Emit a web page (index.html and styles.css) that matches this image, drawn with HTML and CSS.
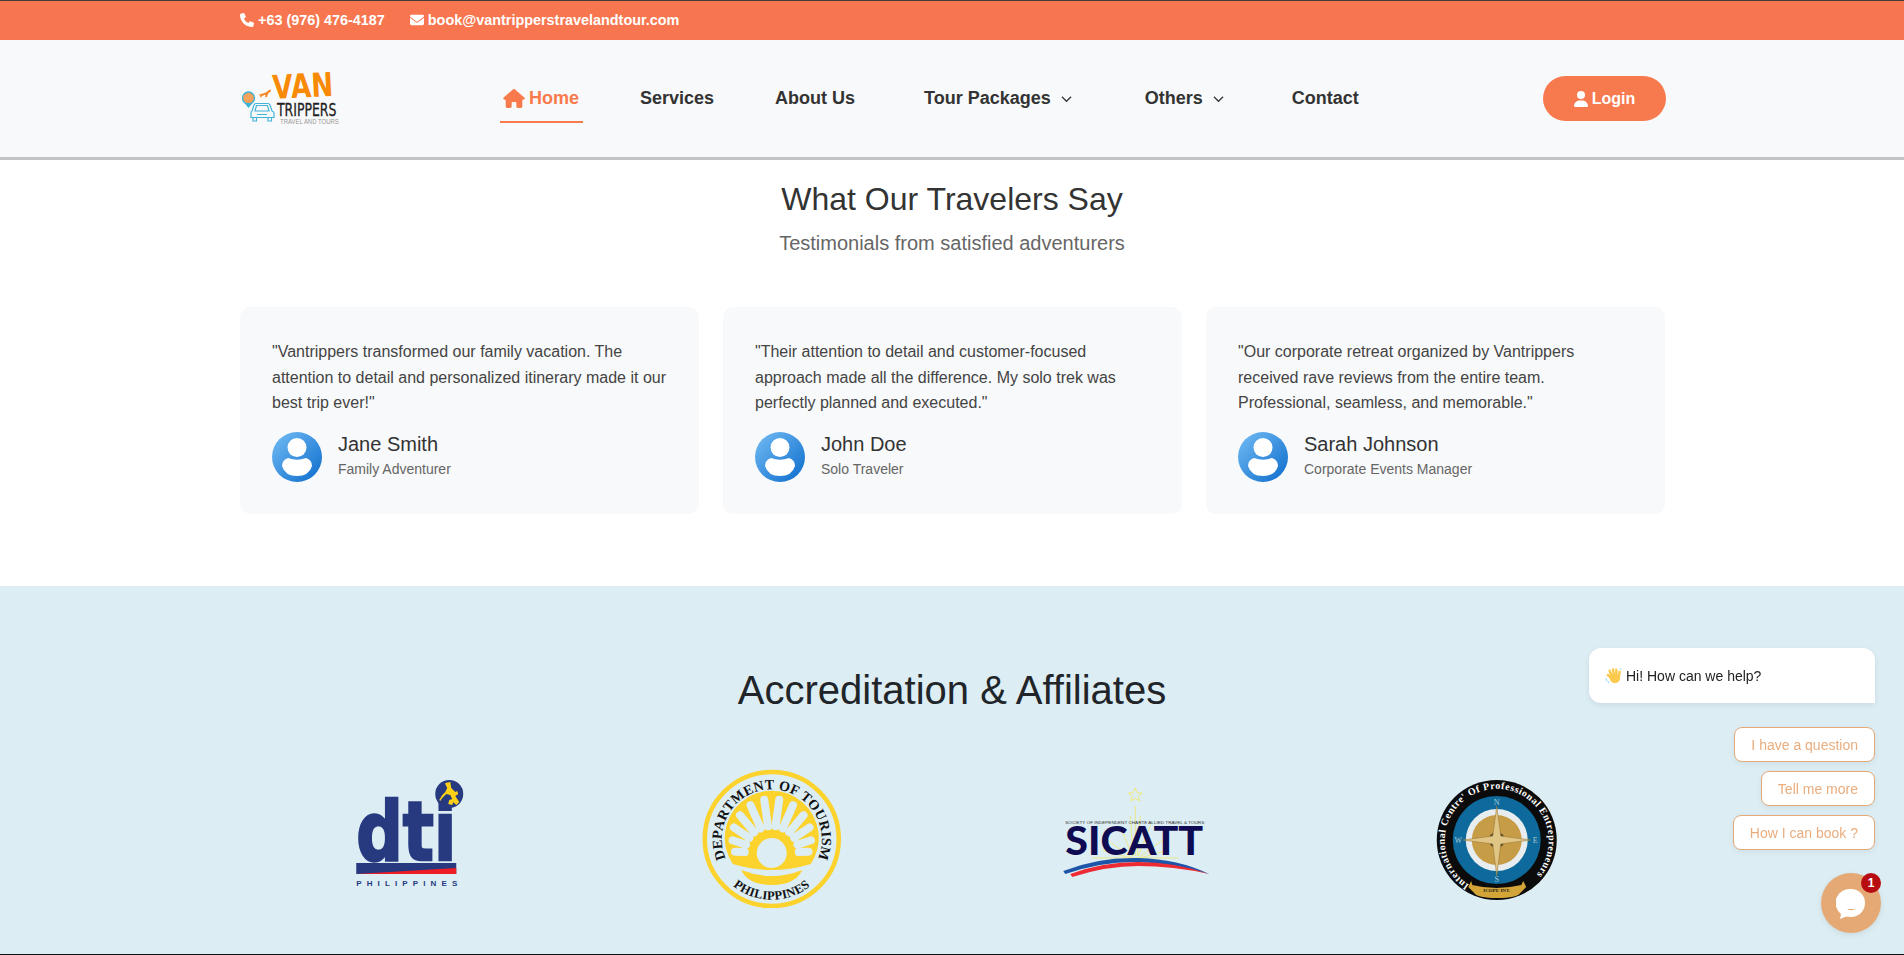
FILE: index.html
```html
<!doctype html>
<html lang="en">
<head>
    <meta charset="UTF-8">
    <title>Van Trippers Travel and Tours</title>
    <link rel="stylesheet" href="styles.css">
</head>
<body>
    <div class="topbar">
        <div class="wrap topbar-in">
            <span class="top-item">
                <svg class="top-ico" viewBox="0 0 512 512"><path d="M164.900 24.600c-7.700-18.600-28-28.500-47.400-23.200l-88 24C12.100 30.200 0 46 0 64C0 311.400 200.600 512 448 512c18 0 33.800-12.100 38.600-29.500l24-88c5.300-19.400-4.600-39.700-23.200-47.400l-96-40c-16.300-6.800-35.200-2.100-46.300 11.600L304.700 368C234.300 334.700 177.300 277.700 144 207.300L193.300 167c13.700-11.200 18.400-30 11.600-46.300l-40-96z"/></svg>
                +63 (976) 476-4187
            </span>
            <span class="top-item">
                <svg class="top-ico" viewBox="0 0 512 512"><path d="M48 64C21.500 64 0 85.500 0 112c0 15.100 7.100 29.300 19.200 38.400L236.800 313.600c11.400 8.500 27 8.500 38.400 0L492.800 150.400c12.100-9.100 19.200-23.300 19.200-38.400c0-26.500-21.500-48-48-48H48zM0 176V384c0 35.300 28.700 64 64 64H448c35.300 0 64-28.700 64-64V176L294.400 339.200c-22.800 17.100-54 17.100-76.800 0L0 176z"/></svg>
                book@vantripperstravelandtour.com
            </span>
        </div>
    </div>

    <header class="navbar">
        <div class="wrap navbar-in">
            <svg class="logo" viewBox="0 0 100 56">
                <text class="logo-van" transform="translate(33 28) rotate(-3) scale(.795 1)">VAN</text>
                <text class="logo-trip" transform="translate(37 45) scale(.77 1)">TRIPPERS</text>
                <text class="logo-sub" transform="translate(40 53) scale(.92 1)">TRAVEL AND TOURS</text>
                <path d="M18 24l8-2.500 3-2.500 2-.5-.5 2-2.500 2-1 3.500-1.500 .5-.2-3-3.300 1.500-1 1.500-.8-.5 .3-1.500-2.500-.5z" fill="#f7811c"/>
                <circle cx="8.500" cy="27" r="6" fill="#f4a35c" stroke="#3cb2d6" stroke-width="1.300"/>
                <path d="M4.500 32l4 5 4-5z" fill="#3cb2d6"/>
                <path d="M12 40l2-6q.5-1.500 2-1.500h12q1.500 0 2 1.500l2 6q2 .5 2 2.500v4h-23v-4q0-2 1-2.500zM15 40h14l-1.500-5.500h-11z" fill="none" stroke="#43b4d8" stroke-width="1.200"/>
                <path d="M13 47v3h3.500v-3M28 47v3h3.500v-3M17 43.500h10" fill="none" stroke="#43b4d8" stroke-width="1.200"/>
            </svg>

            <nav class="menu">
                <a class="menu-link active" href="#">
                    <svg class="home-ico" viewBox="0 0 576 512"><path d="M575.800 255.500c0 18-15 32.100-32 32.100h-32l.7 160.200c0 2.700-.2 5.400-.5 8.100V472c0 22.100-17.900 40-40 40H456c-1.100 0-2.200 0-3.300-.1c-1.400 .1-2.800 .1-4.200 .1H416 392c-22.100 0-40-17.900-40-40V448 384c0-17.700-14.300-32-32-32H256c-17.700 0-32 14.300-32 32v64 24c0 22.100-17.900 40-40 40H160 128.100c-1.500 0-3-.1-4.500-.2c-1.200 .1-2.400 .2-3.600 .2H104c-22.100 0-40-17.900-40-40V360c0-.9 0-1.900 .1-2.800V287.600H32c-18 0-32-14-32-32.100c0-9 3-17 10-24L266.400 8c7-7 15-8 22-8s15 2 21 7L564.800 231.500c8 7 12 15 11 24z"/></svg>
                    Home
                </a>
                <a class="menu-link m-services" href="#">Services</a>
                <a class="menu-link m-about" href="#">About Us</a>
                <a class="menu-link m-tour" href="#">Tour Packages <svg class="chev" viewBox="0 0 12 8"><path d="M1 1.500l5 5 5-5"/></svg></a>
                <a class="menu-link m-others" href="#">Others <svg class="chev" viewBox="0 0 12 8"><path d="M1 1.500l5 5 5-5"/></svg></a>
                <a class="menu-link m-contact" href="#">Contact</a>
            </nav>

            <a class="login" href="#">
                <svg class="login-ico" viewBox="0 0 448 512"><path d="M224 256A128 128 0 1 0 224 0a128 128 0 1 0 0 256zm-45.700 48C79.800 304 0 383.800 0 482.300C0 498.700 13.300 512 29.700 512H418.300c16.400 0 29.700-13.300 29.700-29.700C448 383.800 368.200 304 269.700 304H178.300z"/></svg>
                Login
            </a>
        </div>
    </header>

    <svg class="defs" width="0" height="0">
        <defs>
            <linearGradient id="avatarGrad" x1="0" y1="0" x2="1" y2="1">
                <stop offset="0" stop-color="#74bdf5"/>
                <stop offset="1" stop-color="#0b6bcb"/>
            </linearGradient>
            <symbol id="avatar" viewBox="0 0 50 50">
                <circle cx="25" cy="25" r="25" fill="url(#avatarGrad)"/>
                <circle cx="25" cy="15.500" r="9.500" fill="#fff"/>
                <path d="M10 34q0-6 6-8q9 3.500 18 0q6 2 6 8q-3 10-15 10t-15-10z" fill="#fff"/>
            </symbol>
        </defs>
    </svg>

    <section class="testimonials">
        <h2 class="t-title">What Our Travelers Say</h2>
        <p class="t-sub">Testimonials from satisfied adventurers</p>
        <div class="wrap t-grid">
            <article class="t-card">
                <p class="t-text">"Vantrippers transformed our family vacation. The attention to detail and personalized itinerary made it our best trip ever!"</p>
                <div class="t-person">
                    <svg class="avatar"><use href="#avatar"/></svg>
                    <div class="t-who">
                        <div class="t-name">Jane Smith</div>
                        <div class="t-role">Family Adventurer</div>
                    </div>
                </div>
            </article>
            <article class="t-card">
                <p class="t-text">"Their attention to detail and customer-focused approach made all the difference. My solo trek was perfectly planned and executed."</p>
                <div class="t-person">
                    <svg class="avatar"><use href="#avatar"/></svg>
                    <div class="t-who">
                        <div class="t-name">John Doe</div>
                        <div class="t-role">Solo Traveler</div>
                    </div>
                </div>
            </article>
            <article class="t-card">
                <p class="t-text">"Our corporate retreat organized by Vantrippers received rave reviews from the entire team. Professional, seamless, and memorable."</p>
                <div class="t-person">
                    <svg class="avatar"><use href="#avatar"/></svg>
                    <div class="t-who">
                        <div class="t-name">Sarah Johnson</div>
                        <div class="t-role">Corporate Events Manager</div>
                    </div>
                </div>
            </article>
        </div>
    </section>

    <section class="affiliates">
        <h2 class="a-title">Accreditation &amp; Affiliates</h2>
        <div class="a-row">
            <!-- dti -->
            <svg class="a-logo" viewBox="0 0 362 150">
                <text class="dti-word" x="129" y="102" textLength="100" lengthAdjust="spacingAndGlyphs">dti</text>
                <rect x="129" y="105" width="100" height="11" fill="#273a80"/>
                <path d="M129 116l100-6v6z" fill="#ee1c25"/>
                <text class="dti-sub" x="129" y="128" textLength="101">PHILIPPINES</text>
                <circle cx="222" cy="36" r="14" fill="#273a80"/>
                <path d="M218 25l5-1 1 6 4 4 2-1 1 3-3 2 2 3 2 3-3 3-3-3-1 3-4-1 1-4 3-1-2-4-4-1-4 4-2 3-1-1 3-5 3-3 2-4-2-4z" fill="#fcd116"/>
            </svg>
            <!-- department of tourism -->
            <svg class="a-logo" viewBox="0 0 362 150">
                <defs>
                    <path id="dotTop" d="M140.500 110A50 50 0 1 1 222.500 110"/>
                    <path id="dotBottom" d="M134.800 120A61 61 0 0 0 228.200 120"/>
                    <path id="dotPetals" d="M3.800-26.700L7.500-53.300M11-24.700L21.300-47.800M17.400-20.700L31.800-37.800M22.400-15.100L37.800-25.500M25.700-8.300L39.200-12.700M27-.9L36.800-1.300"/>
                </defs>
                <circle cx="181.500" cy="81" r="67" fill="none" stroke="#fcd22d" stroke-width="4.500"/>
                <text class="dot-text"><textPath href="#dotTop" startOffset="50%" text-anchor="middle">DEPARTMENT OF TOURISM</textPath></text>
                <text class="dot-text dot-small"><textPath href="#dotBottom" startOffset="50%" text-anchor="middle">PHILIPPINES</textPath></text>
                <path d="M142.500 106A47 47 0 1 1 220.500 106Q181.500 118 142.500 106z" fill="#fcd22d"/>
                <g class="dot-petals">
                    <use href="#dotPetals" transform="translate(181.500 95)"/>
                    <use href="#dotPetals" transform="translate(181.500 95) scale(-1 1)"/>
                </g>
                <circle cx="181.500" cy="95" r="15" fill="#dcedf4"/>
                <path d="M151 112Q181.500 124 212 112Q205 127 181.500 127T151 112z" fill="#fcd22d"/>
            </svg>
            <!-- sicatt -->
            <svg class="a-logo" viewBox="0 0 362 150">
                <path d="M183 30l1.800 4.600 5 .4-3.800 3.200 1.200 4.800-4.200-2.600-4.200 2.600 1.200-4.800-3.800-3.200 5-.4z" fill="none" stroke="#f2e75a" stroke-width=".8"/>
                <path d="M183 48v50M178 58l3 40M188 58l-3 40M168 68l12 30M198 68l-12 30M155 82l24 17M211 82l-24 17M140 100h86M150 92l28 8M216 92l-28 8" stroke="#f2e75a" stroke-width=".7" fill="none"/>
                <text class="sic-small" x="113" y="66" textLength="139" lengthAdjust="spacingAndGlyphs">SOCIETY OF INDEPENDENT CHARTE ALLIED TRAVEL &amp; TOURS</text>
                <text class="sic-word" x="113" y="97" textLength="138" lengthAdjust="spacingAndGlyphs">SICATT</text>
                <path d="M111 113q35-14 75-13 40 1 71 16-38-11-71-12-35-1-73 12z" fill="#1d55a8"/>
                <path d="M118 116q32-12 68-12 36 0 71 12-36-8-71-8-32 0-66 11z" fill="#ee2a32"/>
            </svg>
            <!-- icpe -->
            <svg class="a-logo" viewBox="0 0 362 150">
                <defs>
                    <path id="icpeTop" d="M154 127A52 52 0 1 1 209 127"/>
                </defs>
                <circle cx="181.500" cy="82" r="60" fill="#0b0b0b"/>
                <text class="icpe-text"><textPath href="#icpeTop" textLength="252" lengthAdjust="spacing">International Centre' Of Professional Entrepreneurs</textPath></text>
                <circle cx="181.500" cy="82" r="44" fill="#0e6a9c"/>
                <circle cx="181.500" cy="82" r="31" fill="#e8edf0"/>
                <circle cx="181.500" cy="82" r="25" fill="#c79c46"/>
                <circle cx="181.500" cy="82" r="8" fill="#5b4a2a"/>
                <path d="M181.500 48l4 30 30 4-30 4-4 32-4-32-30-4 30-4z" fill="#e0c585" stroke="#8f7235" stroke-width=".5"/>
                <text class="icpe-dir" x="181.500" y="47">N</text>
                <text class="icpe-dir" x="181.500" y="124">S</text>
                <text class="icpe-dir" x="143" y="85">W</text>
                <text class="icpe-dir" x="220" y="85">E</text>
                <path d="M157 127q24 6 49 0l2-4 3 6-6 6q-3 5-23 5t-23-5l-6-6 3-6z" fill="#d3a437"/>
                <text class="icpe-rib" x="181.500" y="134">ICOPE INT.</text>
            </svg>
        </div>
    </section>

    <aside class="chat">
        <div class="chat-hello">
            <svg class="wave" viewBox="0 0 18 18">
                <g stroke="#fbc94d" stroke-width="2.600" stroke-linecap="round"><path d="M7 10L5 4M9.500 9L8.500 2.500M12 9.500V3M14.500 11l1-6"/></g>
                <ellipse cx="10.500" cy="12" rx="5.500" ry="5" fill="#fbc94d"/>
                <path d="M6 11L3 8.500" stroke="#fbc94d" stroke-width="2.600" stroke-linecap="round"/>
                <path d="M1 12l1 3M3 15l1 2M15.500 1l2 2" stroke="#8fd0ee" fill="none"/>
            </svg>
            Hi! How can we help?
        </div>
        <button class="chat-btn">I have a question</button>
        <button class="chat-btn">Tell me more</button>
        <button class="chat-btn">How I can book ?</button>
        <div class="launcher">
            <svg class="launcher-ico" viewBox="0 0 30 32"><path d="M15 1a14 14 0 0 1 0 28c-2 0-4-.5-6 0l-5 2 1-5a14 14 0 0 1 10-25z" fill="#fff"/><path d="M11 21q4 2.500 8 0z" fill="#e5a976"/></svg>
            <span class="badge">1</span>
        </div>
    </aside>
</body>
</html>
```

FILE: styles.css
```css
* { margin: 0; padding: 0; box-sizing: border-box; }

html, body { height: 955px; overflow: hidden; }

body {
    font-family: "Liberation Sans", Arial, sans-serif;
    color: #333;
    background: #fff;
    border-top: 1px solid #3d3d3d;
    border-bottom: 1px solid #111;
}

.wrap { width: 1425px; margin-left: 240px; }

.defs { display: block; height: 0; }

/* top orange strip */
.topbar { background: #f8764f; height: 39px; color: #fff; }
.topbar-in { display: flex; align-items: center; height: 100%; gap: 25px; padding-bottom: 2px; }
.top-item { display: flex; align-items: center; gap: 4px; font-size: 14.400px; font-weight: 700; }
.top-ico { width: 14px; height: 14px; fill: #fff; }

/* nav */
.navbar { background: #f8f9fa; height: 120px; border-bottom: 3px solid #c4c4c4; }
.navbar-in { display: flex; align-items: center; height: 117px; }
.logo { width: 100px; height: 56px; flex: none; overflow: visible; }

.logo-van { font-family: "DejaVu Sans"; font-weight: 700; font-size: 33px; fill: #f98a06; }
.logo-trip { font-family: "DejaVu Sans Condensed", "DejaVu Sans"; font-size: 18px; fill: #222; stroke: #222; stroke-width: .3px; }
.logo-sub { font-family: "Liberation Sans"; font-size: 6.500px; fill: #999; }

.menu { display: flex; align-items: center; margin-left: 160px; height: 60px; }
.menu-link {
    display: flex;
    align-items: center;
    gap: 4px;
    height: 48px;
    padding: 2px 4px 0;
    color: #333;
    font-size: 18px;
    font-weight: 700;
    text-decoration: none;
    white-space: nowrap;
    border-bottom: 2px solid transparent;
}
.menu-link.active { color: #f97a4c; border-bottom-color: #f97a4c; }
.home-ico { width: 22px; height: 19px; fill: #f97a4c; margin-left: -1px; }
.m-services { margin-left: 53px; }
.m-about { margin-left: 53px; }
.m-tour { margin-left: 61px; }
.m-others { margin-left: 65px; }
.m-contact { margin-left: 60px; }
.chev { width: 11px; height: 8px; margin-left: 6px; fill: none; stroke: #333; stroke-width: 1.300; }

.login {
    margin-left: auto;
    margin-right: -1px;
    width: 123px;
    height: 45px;
    display: flex;
    align-items: center;
    justify-content: center;
    gap: 4px;
    background: #f7794e;
    color: #fff;
    border-radius: 23px;
    font-size: 16px;
    font-weight: 700;
    text-decoration: none;
}
.login-ico { width: 14px; height: 16px; fill: #fff; }

/* testimonials */
.testimonials { height: 426px; padding-top: 20px; text-align: center; }
.t-title { font-size: 32px; font-weight: 400; line-height: 38px; color: #333; }
.t-sub { font-size: 20px; line-height: 24px; margin-top: 13px; color: #666; }
.t-grid { display: grid; grid-template-columns: repeat(3, 1fr); gap: 24px; margin-top: 52px; text-align: left; }
.t-card { background: #f8f9fa; border-radius: 10px; padding: 32px; height: 207px; }
.t-text { font-size: 16px; line-height: 25.600px; color: #444; }
.t-person { display: flex; align-items: center; gap: 16px; margin-top: 16px; }
.avatar { width: 50px; height: 50px; flex: none; }
.t-who { padding-bottom: 4px; }
.t-name { font-size: 20px; line-height: 24px; color: #333; }
.t-role { font-size: 14px; line-height: 17px; margin-top: 5px; color: #666; }

/* affiliates */
.affiliates { height: 369px; background: #dcedf4; padding-top: 80px; text-align: center; }
.a-title { font-size: 40px; font-weight: 400; line-height: 48px; color: #212529; }
.a-row { display: flex; width: 1450px; margin: 44px auto 0; }
.a-logo { flex: 1; width: 362px; height: 150px; }

.dti-word { font-family: "DejaVu Sans"; font-weight: 700; font-size: 82px; fill: #273a80; stroke: #273a80; stroke-width: 2.500px; }
.dti-sub { font-family: "Liberation Sans"; font-weight: 700; font-size: 8px; fill: #273a80; }
.dot-text { font-family: "Liberation Serif"; font-weight: 700; font-size: 14px; fill: #111; letter-spacing: .3px; }
.dot-small { font-size: 12.500px; }
.dot-petals { stroke: #dcedf4; stroke-width: 8; stroke-linecap: round; fill: none; }
.sic-small { font-family: "Liberation Sans"; font-size: 4.200px; fill: #333; }
.sic-word { font-family: "Lato", "Liberation Sans"; font-weight: 900; font-size: 40px; fill: #0e0b52; }
.icpe-text { font-family: "Liberation Serif"; font-weight: 700; font-size: 10px; fill: #fff; }
.icpe-dir { font-family: "Liberation Serif"; font-size: 8px; fill: #a9c8d4; text-anchor: middle; }
.icpe-rib { font-family: "Liberation Serif"; font-weight: 700; font-size: 5px; fill: #222; text-anchor: middle; }

/* chat widget */
.chat {
    position: fixed;
    top: 648px;
    right: 29px;
    width: 286px;
    display: flex;
    flex-direction: column;
    align-items: flex-end;
}
.chat-hello {
    width: 286px;
    height: 55px;
    display: flex;
    align-items: center;
    gap: 4px;
    padding-left: 16px;
    background: #fff;
    border-radius: 12px 12px 0 12px;
    box-shadow: 0 2px 6px rgba(0, 0, 0, .08);
    font-size: 14px;
    color: #222;
}
.wave { width: 17px; height: 17px; }
.chat-btn {
    height: 35px;
    padding: 0 16px;
    margin-bottom: 9px;
    background: #fff;
    border: 1px solid #e5a976;
    border-radius: 8px;
    color: #e9ad7e;
    font: 14px "Liberation Sans", Arial, sans-serif;
    box-shadow: 0 2px 6px rgba(0, 0, 0, .06);
}
.chat-hello + .chat-btn { margin-top: 24px; }
.launcher {
    position: relative;
    width: 60px;
    height: 60px;
    margin: 14px -6px 0 0;
    border-radius: 50%;
    background: #e5a976;
    display: flex;
    align-items: center;
    justify-content: center;
    box-shadow: 0 2px 6px rgba(0, 0, 0, .08);
}
.launcher-ico { width: 30px; height: 32px; margin-top: 2px; }
.badge {
    position: absolute;
    top: 0;
    right: 0;
    width: 20px;
    height: 20px;
    border-radius: 50%;
    background: #b70d12;
    color: #fff;
    font-size: 12px;
    font-weight: 700;
    line-height: 20px;
    text-align: center;
}
```
